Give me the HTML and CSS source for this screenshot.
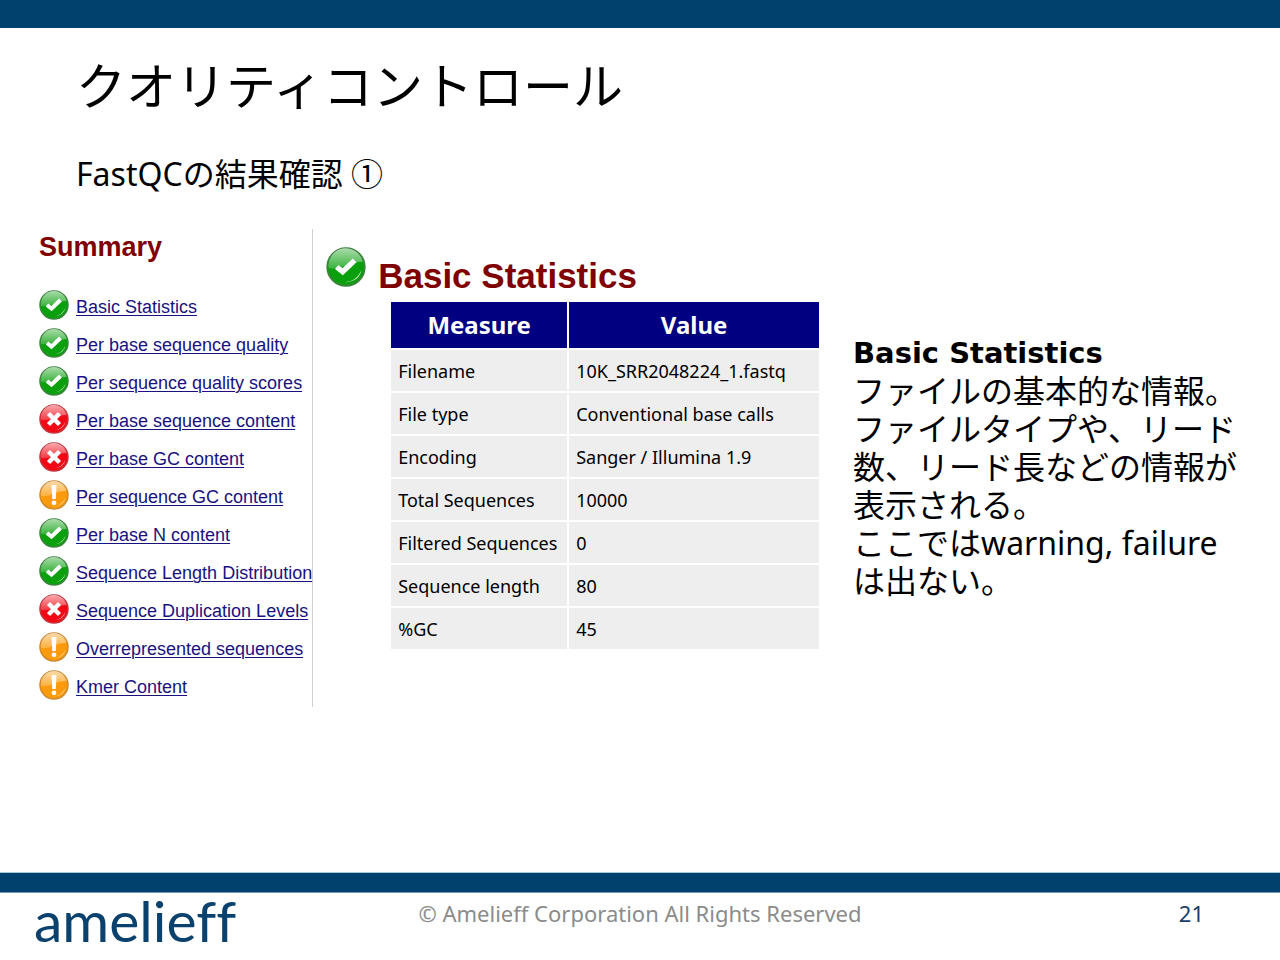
FILE: index.html
```html
<!DOCTYPE html>
<html lang="ja">
<head>
<meta charset="utf-8">
<title>クオリティコントロール</title>
<meta name="viewport" content="width=device-width, initial-scale=1">
<link rel="stylesheet" href="styles.css">
</head>
<body>
<svg class="defs" width="0" height="0" aria-hidden="true">
  <defs>
    <linearGradient id="shine" x1="0" y1="0" x2="0" y2="1">
      <stop offset="0" stop-color="#fff" stop-opacity=".65"/>
      <stop offset="1" stop-color="#fff" stop-opacity=".2"/>
    </linearGradient>
    <symbol id="gloss" viewBox="0 0 30 30">
      <path d="M2 16A13 13 0 0 1 27.500 11Q20 11 14 14T2 16Z" fill="url(#shine)"/>
      <path d="M14 26.500Q23 26 26.500 17.500Q25 26 14 26.500Z" fill="#fff" fill-opacity=".75"/>
    </symbol>
    <symbol id="pass" viewBox="0 0 30 30">
      <circle cx="15" cy="15" r="14" fill="#0a9f0c" stroke="#39863b" stroke-width="1.500"/>
      <use href="#gloss"/>
      <path d="M8 15L12.500 18.500L21.500 10" fill="none" stroke="#fff" stroke-width="4"/>
    </symbol>
    <symbol id="fail" viewBox="0 0 30 30">
      <circle cx="15" cy="15" r="14" fill="#f20814" stroke="#c5343b" stroke-width="1.500"/>
      <use href="#gloss"/>
      <path d="M9.500 9.500L20.500 20.500M20.500 9.500L9.500 20.500" fill="none" stroke="#fff" stroke-width="4.500"/>
    </symbol>
    <symbol id="warn" viewBox="0 0 30 30">
      <circle cx="15" cy="15" r="14" fill="#fb9b0b" stroke="#cf8b32" stroke-width="1.500"/>
      <use href="#gloss"/>
      <path d="M12.500 5H17.500L16.800 19H13.200Z" fill="#fff"/>
      <circle cx="15" cy="22.800" r="2.400" fill="#fff"/>
    </symbol>
  </defs>
</svg>
<div class="slide">
  <div class="bar bar-top"></div>
  <header class="heading">
    <h1>クオリティコントロール</h1>
    <p class="subtitle">FastQCの結果確認 ①</p>
  </header>
  <main class="content">
    <nav class="summary" aria-labelledby="summary-title">
      <h2 id="summary-title">Summary</h2>
      <ul>
        <li><svg class="icon"><use href="#pass"/></svg><a href="#stats">Basic Statistics</a></li>
        <li><svg class="icon"><use href="#pass"/></svg><a href="#">Per base sequence quality</a></li>
        <li><svg class="icon"><use href="#pass"/></svg><a href="#">Per sequence quality scores</a></li>
        <li><svg class="icon"><use href="#fail"/></svg><a href="#">Per base sequence content</a></li>
        <li><svg class="icon"><use href="#fail"/></svg><a href="#">Per base GC content</a></li>
        <li><svg class="icon"><use href="#warn"/></svg><a href="#">Per sequence GC content</a></li>
        <li><svg class="icon"><use href="#pass"/></svg><a href="#">Per base N content</a></li>
        <li><svg class="icon"><use href="#pass"/></svg><a href="#">Sequence Length Distribution</a></li>
        <li><svg class="icon"><use href="#fail"/></svg><a href="#">Sequence Duplication Levels</a></li>
        <li><svg class="icon"><use href="#warn"/></svg><a href="#">Overrepresented sequences</a></li>
        <li><svg class="icon"><use href="#warn"/></svg><a href="#">Kmer Content</a></li>
      </ul>
    </nav>
    <section class="stats" id="stats">
      <div class="stats-title">
        <svg class="icon icon-large"><use href="#pass"/></svg>
        <h2>Basic Statistics</h2>
      </div>
      <table>
        <thead>
          <tr><th scope="col" class="measure">Measure</th><th scope="col">Value</th></tr>
        </thead>
        <tbody>
          <tr><td>Filename</td><td>10K_SRR2048224_1.fastq</td></tr>
          <tr><td>File type</td><td>Conventional base calls</td></tr>
          <tr><td>Encoding</td><td>Sanger / Illumina 1.9</td></tr>
          <tr><td>Total Sequences</td><td>10000</td></tr>
          <tr><td>Filtered Sequences</td><td>0</td></tr>
          <tr><td>Sequence length</td><td>80</td></tr>
          <tr><td>%GC</td><td>45</td></tr>
        </tbody>
      </table>
    </section>
    <section class="note">
      <h3>Basic Statistics</h3>
      <p>ファイルの基本的な情報。</p>
      <p>ファイルタイプや、リード数、リード長などの情報が表示される。</p>
      <p>ここではwarning, failureは出ない。</p>
    </section>
  </main>
  <div class="bar bar-bottom"></div>
  <footer class="footer">
    <span class="logo">amelieff</span>
    <span class="copyright">© Amelieff Corporation All Rights Reserved</span>
    <span class="page">21</span>
  </footer>
</div>
</body>
</html>
```
FILE: styles.css
```css
* {
  box-sizing: border-box;
}

body {
  margin: 0;
  background: #fff;
  color: #000;
  font-family: "Noto Sans", "Noto Sans CJK JP", sans-serif;
}

h1, h2, h3, p, ul {
  margin: 0;
  padding: 0;
}

.defs {
  position: absolute;
}

.slide {
  display: flex;
  flex-direction: column;
  min-height: 100vh;
}

.bar {
  background: #00416e;
}

.bar-top {
  height: 28px;
}

.bar-bottom {
  height: 21px;
  border-top: 1px solid #a9c6dc;
  border-bottom: 1px solid #7096b8;
}

.heading {
  padding: 22px 76px 0;
}

h1 {
  font-size: 50px;
  font-weight: 400;
  line-height: 72px;
}

.subtitle {
  margin-top: 28px;
  font-size: 32px;
  line-height: 48px;
}

.content {
  flex: 1;
  display: grid;
  grid-template-columns: 272fr 507fr 423fr;
  align-items: start;
  padding: 31px 39px 0;
}

.summary {
  min-height: 478px;
  border-right: 1px solid #d0d0d4;
  font-family: "Liberation Sans", Arial, sans-serif;
}

.summary h2 {
  color: #800000;
  font-size: 27px;
  line-height: 36px;
}

.summary ul {
  margin-top: 21px;
  list-style: none;
}

.summary li {
  display: flex;
  gap: 7px;
  height: 38px;
  font-size: 18px;
  line-height: 42px;
  white-space: nowrap;
}

.icon {
  flex: none;
  width: 30px;
  height: 30px;
  margin-top: 4px;
}

a {
  color: #1a1180;
  text-underline-offset: 2px;
  text-decoration-thickness: 1px;
}

.stats {
  padding: 16px 0 0 13px;
}

.stats-title {
  display: flex;
  gap: 12px;
}

.icon-large {
  width: 40px;
  height: 40px;
  margin-top: 2px;
}

.stats h2 {
  padding-top: 11px;
  color: #800000;
  font-family: "Liberation Sans", Arial, sans-serif;
  font-size: 35px;
  line-height: 40px;
}

table {
  width: calc(100% - 65px);
  margin: 6px 0 0 65px;
  border-collapse: separate;
  border-spacing: 0;
  font-size: 18px;
  white-space: nowrap;
}

th {
  height: 48px;
  padding: 0;
  background: #000080;
  border-bottom: 2px solid #fff;
  color: #fff;
  font-size: 24px;
  line-height: 32px;
}

.measure {
  width: 178px;
}

td {
  height: 43px;
  padding: 0 7px;
  background: #eee;
  border-bottom: 2px solid #fff;
  line-height: 26px;
}

th:first-child,
td:first-child {
  border-right: 2px solid #fff;
}

.note {
  padding: 105px 0 0 34px;
  font-size: 32px;
  line-height: 38px;
}

.note h3 {
  font-family: "DejaVu Sans", sans-serif;
  font-size: 29px;
}

.footer {
  display: grid;
  grid-template-columns: 1fr auto 1fr;
  align-items: start;
  height: 67px;
  font-size: 22px;
  line-height: 40px;
}

.logo {
  padding-left: 34px;
  color: #0b416d;
  font-family: Lato, sans-serif;
  font-size: 57px;
  font-variant-ligatures: none;
  line-height: 54px;
}

.copyright {
  color: #8b8b8b;
}

.page {
  padding-right: 76px;
  color: #163f6b;
  text-align: right;
}
```
